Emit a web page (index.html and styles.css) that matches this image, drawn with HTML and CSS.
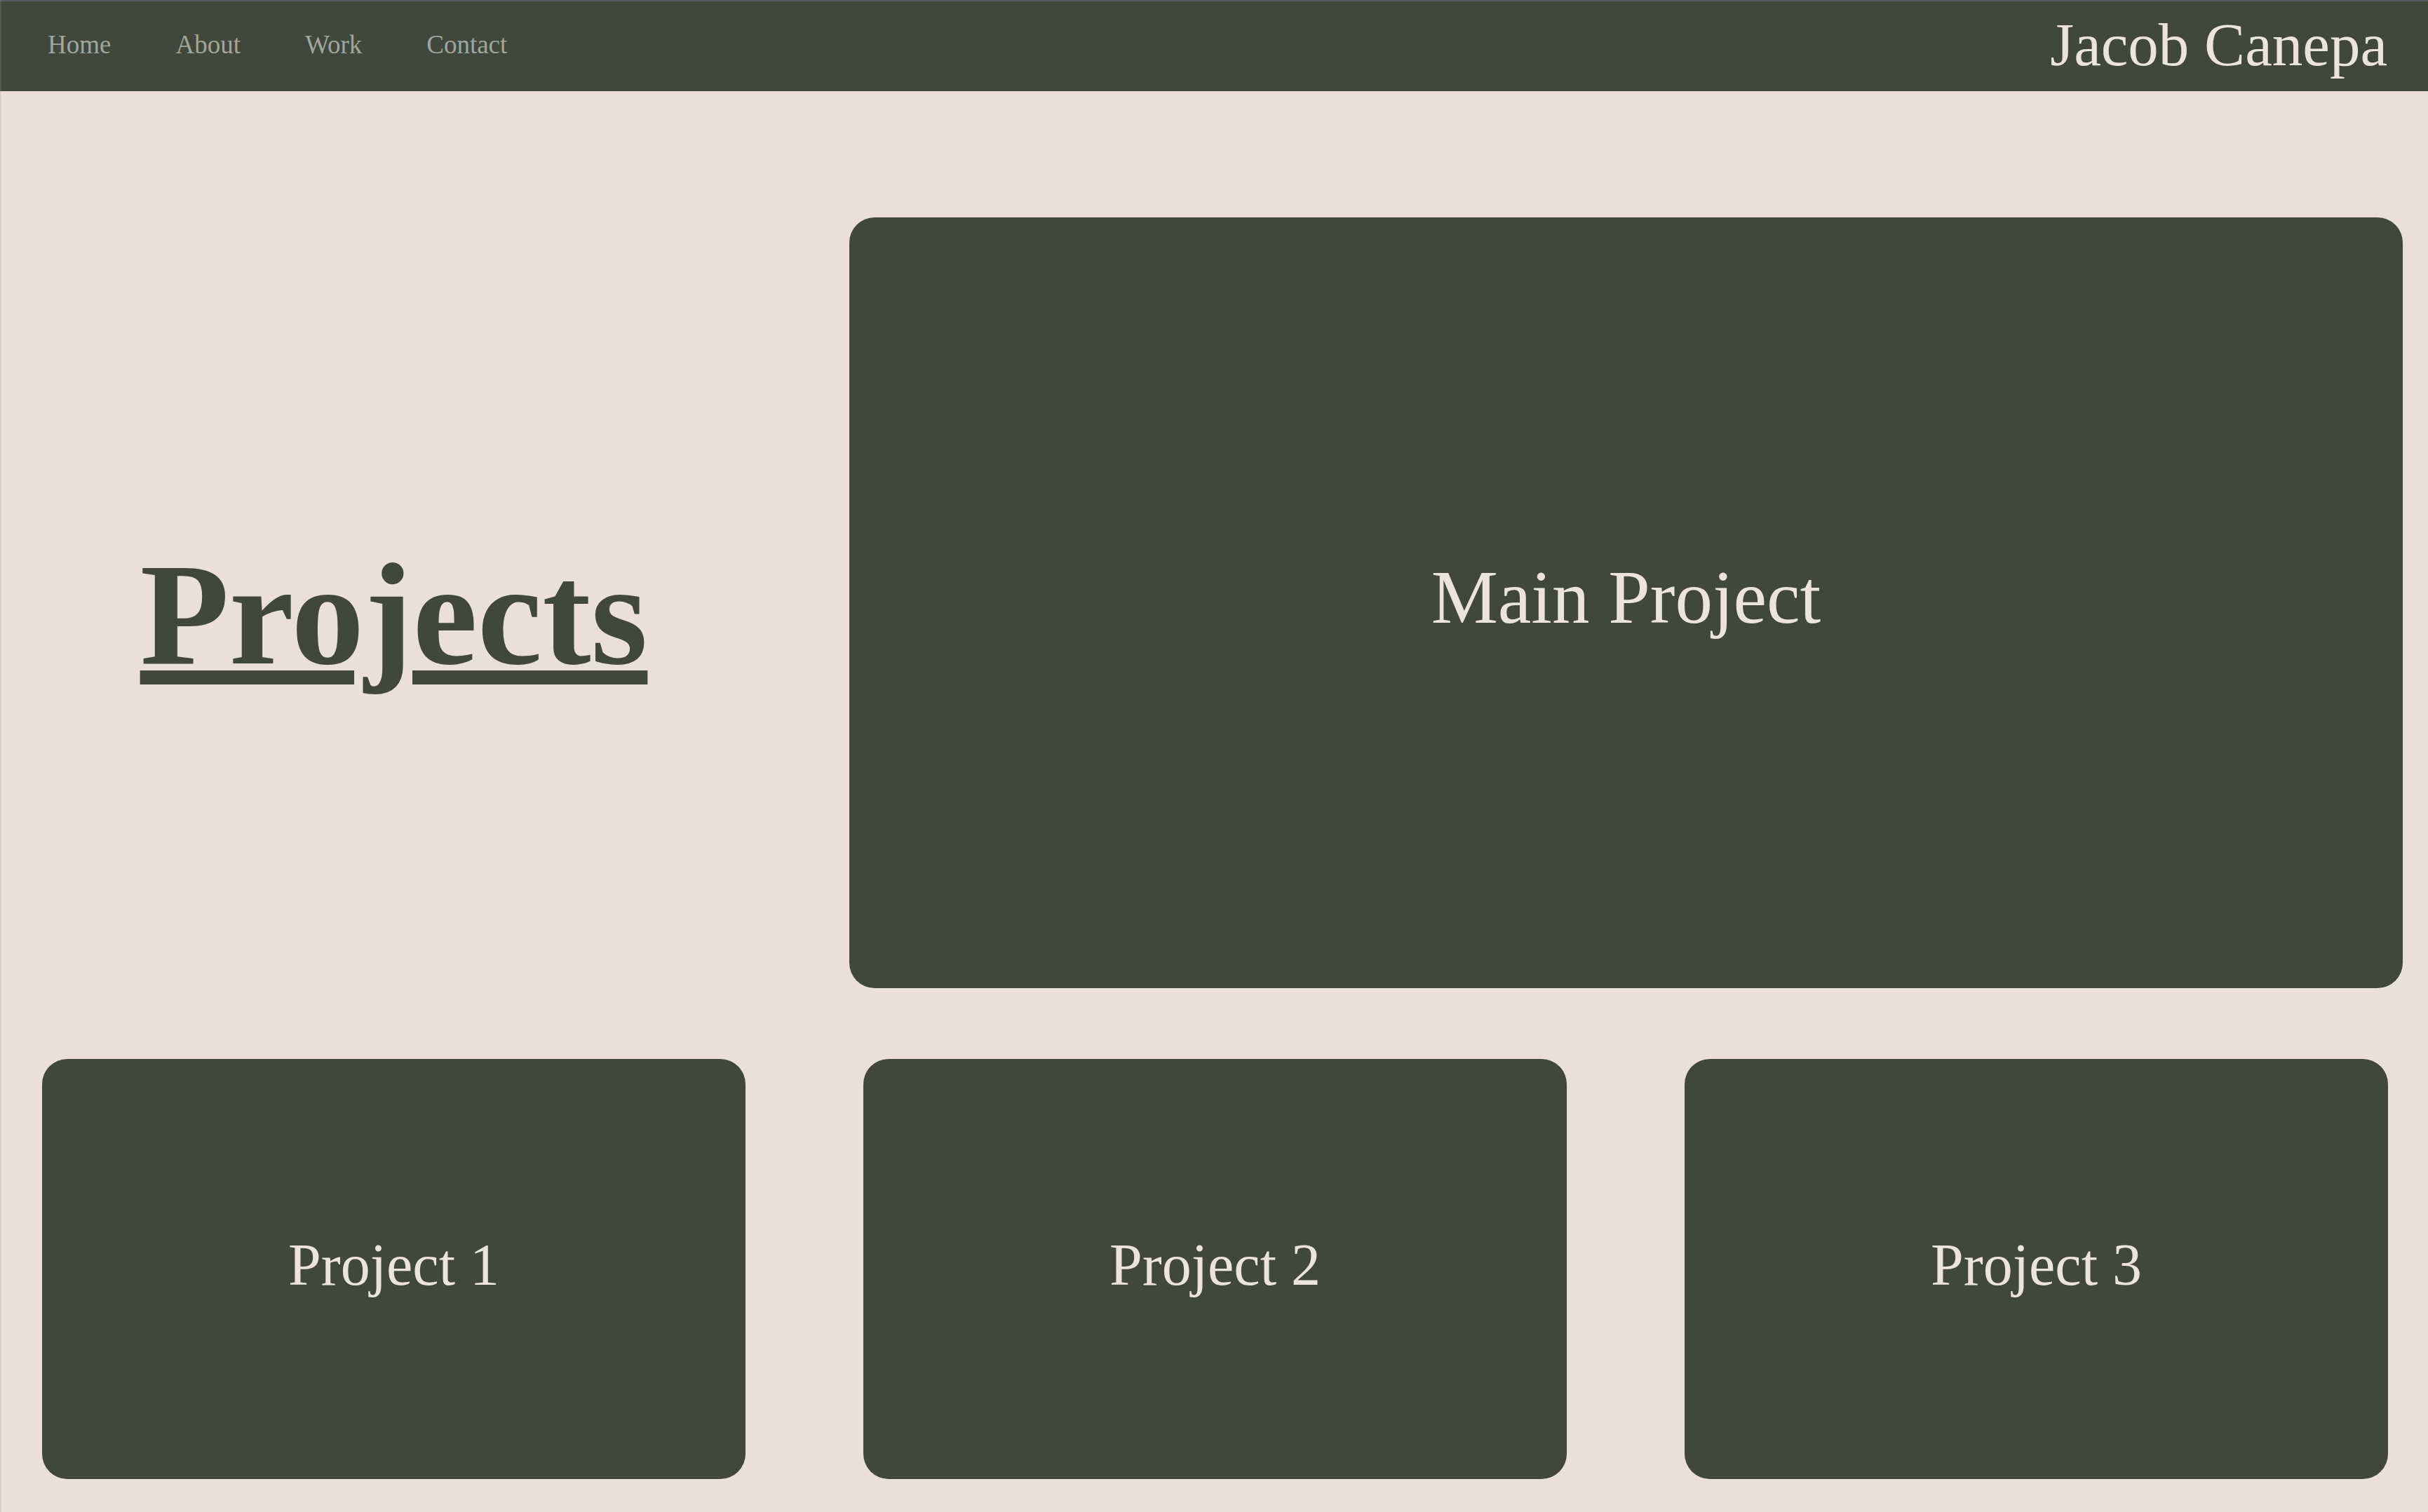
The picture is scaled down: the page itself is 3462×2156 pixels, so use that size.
FILE: index.html
```html
<!DOCTYPE html>
<html lang="en">
<head>
<meta charset="utf-8">
<title>Jacob Canepa — Projects</title>
<link rel="stylesheet" href="styles.css">
</head>
<body>
<div class="edge"></div>
<header class="topbar">
  <nav class="links">
    <a class="link" href="#">Home</a>
    <a class="link" href="#">About</a>
    <a class="link" href="#">Work</a>
    <a class="link" href="#">Contact</a>
  </nav>
  <div class="brand">Jacob Canepa</div>
</header>
<main class="page">
  <section class="top-row">
    <div class="heading-col">
      <h1 class="heading">Projects</h1>
    </div>
    <div class="card card-main">Main Project</div>
  </section>
  <section class="bottom-row">
    <div class="card card-small">Project 1</div>
    <div class="card card-small">Project 2</div>
    <div class="card card-small">Project 3</div>
  </section>
</main>
</body>
</html>
```

FILE: styles.css
```css
html, body {
  margin: 0;
  padding: 0;
}

body {
  background: #e9e1d9;
  font-family: "Palatino Linotype", Palatino, "Book Antiqua", "Liberation Serif", serif;
  border-top: 2px solid #5b5b60;
  overflow: hidden;
  height: 2154px;
}

.edge {
  position: fixed;
  left: 0;
  top: 0;
  bottom: 0;
  width: 2px;
  background: rgba(150, 150, 150, 0.22);
  pointer-events: none;
}

.topbar {
  height: 128px;
  box-sizing: border-box;
  background: #41473b;
  display: flex;
  align-items: center;
  justify-content: space-between;
  padding: 0 58px 6px 68px;
}

.links {
  display: flex;
  gap: 92px;
}

.link {
  color: #a2a59b;
  text-decoration: none;
  font-size: 37px;
}

.brand {
  color: #ebe4db;
  font-size: 87px;
}

.page {
  display: flex;
  flex-direction: column;
  padding-top: 180px;
}

.top-row {
  display: flex;
  align-items: center;
  gap: 148px;
  padding-left: 60px;
}

.heading-col {
  width: 1003px;
  display: flex;
  justify-content: center;
  padding-top: 34px;
}

.heading {
  margin: 0;
  color: #41473b;
  font-size: 208px;
  font-weight: bold;
  text-decoration: underline;
  text-decoration-thickness: 20px;
  text-underline-offset: 10px;
  text-decoration-skip-ink: auto;
  line-height: 1.15;
}

.card {
  background: #41473b;
  color: #ebe4db;
  border-radius: 36px;
  display: flex;
  align-items: center;
  justify-content: center;
  box-sizing: border-box;
}

.card-main {
  width: 2215px;
  height: 1099px;
  font-size: 107px;
  padding-bottom: 15px;
}

.bottom-row {
  display: flex;
  gap: 168px;
  padding-left: 60px;
  margin-top: 101px;
}

.card-small {
  width: 1003px;
  height: 599px;
  font-size: 84px;
  padding-bottom: 12px;
}
```
